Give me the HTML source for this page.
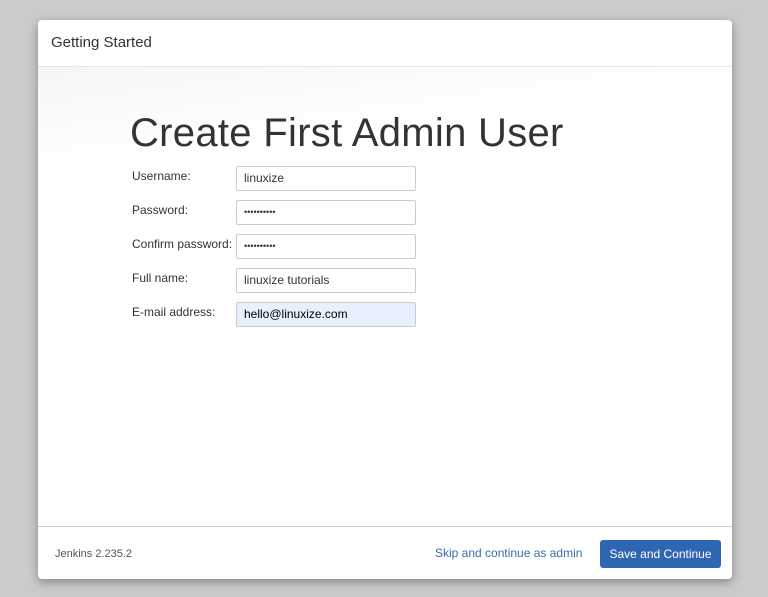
<!DOCTYPE html>
<html><head><style>
html,body{margin:0;padding:0;width:768px;height:597px;background:#cbcbcb;font-family:"Liberation Sans",sans-serif;overflow:hidden}
.modal{position:absolute;left:38px;top:20px;width:694px;height:559px;background:#fff;border-radius:4px;box-shadow:0 3px 10px rgba(0,0,0,.35)}
.hdr{height:46px;border-bottom:1px solid #e8e8e8;font-size:15px;color:#333;line-height:46px;padding-left:13px}
.body{position:absolute;top:47px;left:0;right:0;height:459px;background:linear-gradient(172deg,#f6f6f6 0%,#fff 20%)}
h1{position:absolute;left:92px;top:44px;margin:0;font-size:40px;font-weight:normal;color:#333;letter-spacing:0.3px}
.lbl{position:absolute;left:94px;font-size:12px;color:#333}
.inp{position:absolute;left:198px;width:171px;height:23px;border:1px solid #ccc;border-radius:2px;font-size:12px;color:#333;line-height:23px;padding-left:7px;box-sizing:content-box}
.ftr{position:absolute;top:506px;left:0;right:0;height:53px;border-top:1px solid #ccc}
.ver{position:absolute;left:17px;top:21px;font-size:11px;color:#555}
.skip{position:absolute;left:397px;top:19px;font-size:12px;color:#3a6ca8}
.btn{position:absolute;left:562px;top:13px;width:121px;height:28px;background:#2f66b2;border-radius:3px;color:#fff;font-size:12px;text-align:center;line-height:28px}
</style></head><body>
<div class="modal">
<div class="hdr">Getting Started</div>
<div class="body">
<h1>Create First Admin User</h1>
<div class="lbl" style="top:102px">Username:</div>
<div class="inp" style="top:99px">linuxize</div>
<div class="lbl" style="top:136px">Password:</div>
<div class="inp" style="top:133px;font-size:9px">&#8226;&#8226;&#8226;&#8226;&#8226;&#8226;&#8226;&#8226;&#8226;&#8226;</div>
<div class="lbl" style="top:170px">Confirm password:</div>
<div class="inp" style="top:167px;font-size:9px">&#8226;&#8226;&#8226;&#8226;&#8226;&#8226;&#8226;&#8226;&#8226;&#8226;</div>
<div class="lbl" style="top:204px">Full name:</div>
<div class="inp" style="top:201px">linuxize tutorials</div>
<div class="lbl" style="top:238px">E-mail address:</div>
<div class="inp" style="top:235px;background:#e8f0fe;color:#000">hello@linuxize.com</div>
</div>
<div class="ftr">
<div class="ver">Jenkins 2.235.2</div>
<div class="skip">Skip and continue as admin</div>
<div class="btn">Save and Continue</div>
</div>
</div>
</body></html>
